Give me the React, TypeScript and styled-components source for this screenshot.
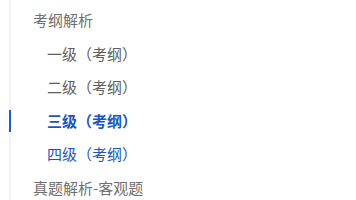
import React from "react";
import styled, { createGlobalStyle } from "styled-components";

const GlobalStyle = createGlobalStyle`
  html, body {
    margin: 0;
    padding: 0;
    background: #ffffff;
  }
  body {
    font-family: "Noto Sans CJK SC", "Noto Sans", sans-serif;
  }
`;

const Wrapper = styled.div`
  padding-left: 9px;
  height: 200px;
  overflow: hidden;
`;

const Nav = styled.nav`
  border-left: 2px solid #f2f2f2;
  padding-top: 3px;
  min-height: 100%;
`;

const Item = styled.div<{ $level: number; $active?: boolean; $open?: boolean }>`
  position: relative;
  height: 33.6px;
  line-height: 33.6px;
  font-size: 15px;
  padding-left: ${(p) => (p.$level === 0 ? 22 : 36)}px;
  color: ${(p) =>
    p.$active || p.$open ? "#1a56c0" : p.$level === 0 ? "#707070" : "#606060"};
  font-weight: ${(p) => (p.$active ? 700 : 400)};
  white-space: nowrap;

  &::before {
    content: "";
    display: ${(p) => (p.$active ? "block" : "none")};
    position: absolute;
    left: -2px;
    top: 6px;
    width: 2px;
    height: 22px;
    background: #1a5fc8;
  }
`;

type Entry = { label: string; level: number; active?: boolean; open?: boolean };

const entries: Entry[] = [
  { label: "考纲解析", level: 0 },
  { label: "一级（考纲）", level: 1 },
  { label: "二级（考纲）", level: 1 },
  { label: "三级（考纲）", level: 1, active: true },
  { label: "四级（考纲）", level: 1, open: true },
  { label: "真题解析-客观题", level: 0 },
];

export default function App() {
  return (
    <>
      <GlobalStyle />
      <Wrapper>
        <Nav>
          {entries.map((e) => (
            <Item key={e.label} $level={e.level} $active={e.active} $open={e.open}>
              {e.label}
            </Item>
          ))}
        </Nav>
      </Wrapper>
    </>
  );
}
